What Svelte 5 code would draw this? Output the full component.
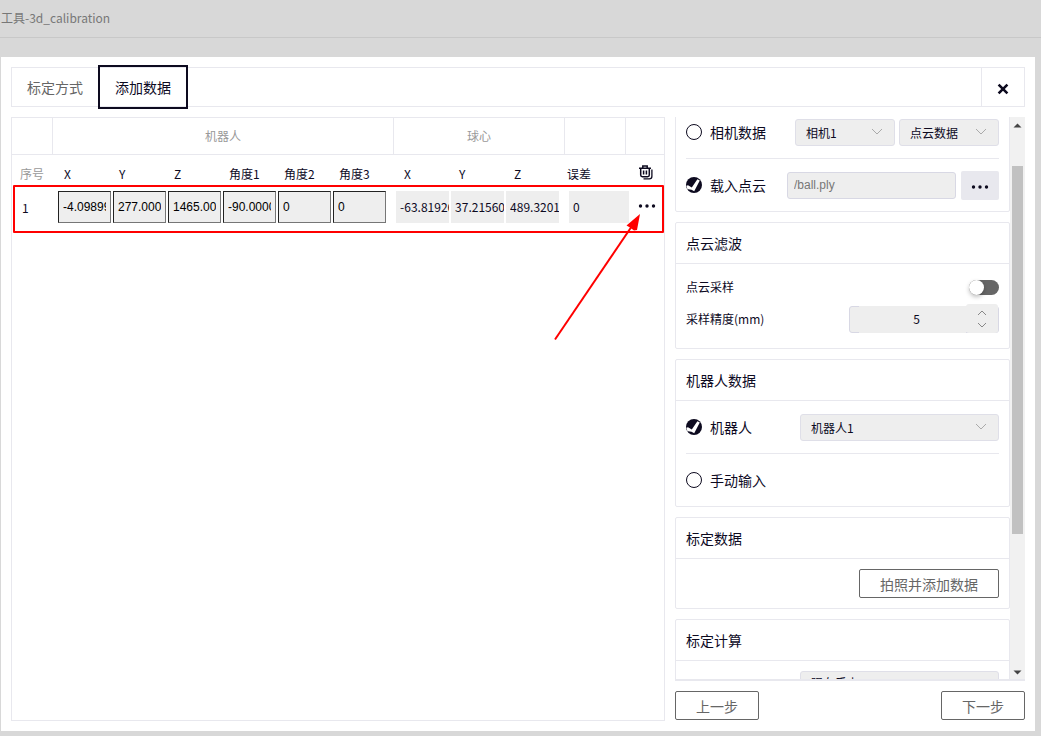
<script>
  let source = $state('cloud');
  let robotSource = $state('robot');
  let sampling = $state(false);
  const robotCols = ['X', 'Y', 'Z', '角度1', '角度2', '角度3'];
  const ballCols = ['X', 'Y', 'Z'];
  const row = {
    id: 1,
    robot: ['-4.098999', '277.000', '1465.00', '-90.0000', '0', '0'],
    ball: ['-63.81926', '37.21560', '489.3201'],
    error: '0'
  };
</script>

{#snippet dots()}
  <svg class="dots" width="18" height="6" viewBox="0 0 18 6" aria-hidden="true">
    <circle cx="2.5" cy="3" r="1.7" /><circle cx="9" cy="3" r="1.7" /><circle cx="15.5" cy="3" r="1.7" />
  </svg>
{/snippet}

{#snippet picker(label, value, size)}
  <span class="picker {size}">
    <select aria-label={label}><option>{value}</option></select>
    <svg width="12" height="8" viewBox="0 0 12 8" aria-hidden="true"><path d="M1 1l5 5 5-5" /></svg>
  </span>
{/snippet}

{#snippet mark(checked)}
  <svg class="mark" width="16" height="16" viewBox="0 0 16 16" aria-hidden="true">
    {#if checked}
      <circle cx="8" cy="8" r="8" fill="#0d0a1f" />
      <path d="M.4 8.800 2 8.200l3.800 2.400L11.400 2.200l2.400 1.200-5.600 10.800C6.600 12.800 4 12 1.400 12.200z" fill="#fff" />
    {:else}
      <circle cx="8" cy="8" r="7.5" fill="#fff" stroke="#0d0a1f" />
    {/if}
  </svg>
{/snippet}

<div class="page">
  <header class="title">工具-3d_calibration</header>
  <main class="dialog">
    <nav class="tabs">
      <button class="tab">标定方式</button>
      <button class="tab active">添加数据</button>
      <button class="close" aria-label="关闭">
        <svg width="12" height="12" viewBox="0 0 12 12"><path d="M1.600 1.600l8.800 8.800M10.400 1.600l-8.800 8.800" /></svg>
      </button>
    </nav>

    <div class="content">
      <section class="data">
        <table>
          <colgroup>
            <col class="c41" /><col class="c60" /><col class="c55" /><col class="c55" /><col class="c55" /><col class="c55" /><col class="c61" />
            <col class="c57" /><col class="c55" /><col class="c59" /><col class="c61" /><col class="c38" />
          </colgroup>
          <thead>
            <tr class="groups">
              <th></th><th colspan="6">机器人</th><th colspan="3">球心</th><th></th><th></th>
            </tr>
            <tr class="names">
              <th class="index">序号</th>
              {#each robotCols as c, i}<th class:first={i === 0} class="robot">{c}</th>{/each}
              {#each ballCols as c, i}<th class:first={i === 0} class="ball">{c}</th>{/each}
              <th class="error">误差</th>
              <th class="tool">
                <button class="bare" aria-label="清空">
                  <svg width="14" height="15" viewBox="0 0 14 15" fill="none" stroke="#0d0a1f" stroke-width="1.5" aria-hidden="true">
                    <path d="M0 3.2h12M3.8 3V1h4.4v2M1.7 3.5v6.6q0 1.7 1.7 1.7h5.2q1.7 0 1.7-1.7V3.5M4.6 5.5v4M7.4 5.5v4" />
                    <path d="M12.9 4.5v6.8q0 2.6-2.6 2.6H4.5" stroke-width="1.3" />
                  </svg>
                </button>
              </th>
            </tr>
          </thead>
          <tbody>
            <tr class="values">
              <td class="index">{row.id}</td>
              {#each row.robot as v, i}
                <td class:first={i === 0} class="robot"><input aria-label={'机器人 ' + robotCols[i]} value={v} /></td>
              {/each}
              {#each row.ball as v, i}
                <td class:first={i === 0} class="ball"><input aria-label={'球心 ' + ballCols[i]} value={v} readonly /></td>
              {/each}
              <td class="error"><input aria-label="误差" value={row.error} readonly /></td>
              <td class="tool"><button class="bare" aria-label="更多">{@render dots()}</button></td>
            </tr>
          </tbody>
        </table>
        <div class="highlight"></div>
        <svg class="arrow" width="88" height="128" viewBox="0 0 88 128" aria-hidden="true">
          <path d="M1 126.500L78 13" stroke="#f00" stroke-width="2" />
          <path d="M86 1L72.500 12.500 76 14.500 80 17.500 83 17z" fill="#f00" />
        </svg>
      </section>

      <aside class="side">
        <div class="scroller">
          <div class="cards">
            <section class="card open">
              <div class="row">
                <label><input type="radio" bind:group={source} value="camera" />{@render mark(source === 'camera')}相机数据</label>
                <div class="pair">{@render picker('相机', '相机1', 'small')}{@render picker('数据类型', '点云数据', 'small')}</div>
              </div>
              <div class="row">
                <label><input type="radio" bind:group={source} value="cloud" />{@render mark(source === 'cloud')}载入点云</label>
                <div class="file">
                  <input aria-label="点云文件" value="/ball.ply" />
                  <button class="browse" aria-label="浏览">{@render dots()}</button>
                </div>
              </div>
            </section>

            <section class="card">
              <h2>点云滤波</h2>
              <div class="fields">
                <div class="field">
                  <label for="sampling">点云采样</label>
                  <input id="sampling" class="switch" type="checkbox" role="switch" bind:checked={sampling} />
                </div>
                <div class="field">
                  <label for="precision">采样精度(mm)</label>
                  <div class="number">
                    <input id="precision" value="5" />
                    <div class="spin">
                      <button aria-label="增加"><svg width="10" height="6" viewBox="0 0 10 6"><path d="M1 5l4-4 4 4" /></svg></button>
                      <button aria-label="减少"><svg width="10" height="6" viewBox="0 0 10 6"><path d="M1 1l4 4 4-4" /></svg></button>
                    </div>
                  </div>
                </div>
              </div>
            </section>

            <section class="card">
              <h2>机器人数据</h2>
              <div class="row">
                <label><input type="radio" bind:group={robotSource} value="robot" />{@render mark(robotSource === 'robot')}机器人</label>
                {@render picker('机器人', '机器人1', 'large')}
              </div>
              <div class="row">
                <label><input type="radio" bind:group={robotSource} value="manual" />{@render mark(robotSource === 'manual')}手动输入</label>
              </div>
            </section>

            <section class="card">
              <h2>标定数据</h2>
              <div class="action"><button class="outline wide">拍照并添加数据</button></div>
            </section>

            <section class="card">
              <h2>标定计算</h2>
              <div class="action">{@render picker('标定类型', '眼在手上', 'large raised')}</div>
            </section>
          </div>
          <div class="bar" aria-hidden="true">
            <svg width="9" height="5" viewBox="0 0 9 5"><path d="M.5 4.500L4.500 .5l4 4z" /></svg>
            <div class="track"><div class="thumb"></div></div>
            <svg width="9" height="5" viewBox="0 0 9 5"><path d="M.5 .5L4.500 4.500l4-4z" /></svg>
          </div>
        </div>
        <footer>
          <button class="outline">上一步</button>
          <button class="outline">下一步</button>
        </footer>
      </aside>
    </div>
  </main>
</div>

<style>
  :global(body) { background: #d8d8d8; }
  .page, .page * { box-sizing: border-box; }
  .page {
    display: flex; flex-direction: column; height: 100vh; padding-bottom: 5px;
    font: 14px/20px "Noto Sans CJK SC", sans-serif; color: #0d0a1f;
  }
  button, input, select { font: inherit; color: inherit; margin: 0; padding: 0; border: 0; background: none; border-radius: 0; }
  .title { flex: none; height: 38px; padding: 0 1px; font-size: 12px; line-height: 35px; color: #777; border-bottom: 1px solid #c8c8c8; }
  .dialog { flex: 1; min-height: 0; display: flex; flex-direction: column; gap: 10px; margin: 19px 6px 0 1px; padding: 10px; background: #fff; }

  .tabs { flex: none; display: flex; align-items: center; height: 40px; border: 1px solid #e8e8ee; }
  .tab { height: 38px; padding: 0 15px; color: #666; }
  .tab.active { height: 44px; color: #0d0a1f; border: 2px solid #0d0a1f; }
  .close { display: grid; place-items: center; width: 43px; height: 38px; margin-left: auto; padding-top: 4px; border-left: 1px solid #e8e8ee; }
  .close path { stroke: #0d0a1f; stroke-width: 2.6; fill: none; }

  .content { flex: 1; min-height: 0; display: flex; gap: 10px; }
  .data { position: relative; flex: 1; min-width: 0; border: 1px solid #e8e8ee; }
  table { width: 100%; table-layout: fixed; border-collapse: separate; border-spacing: 0; font-size: 12px; }
  .c38 { width: 38px; } .c41 { width: 41px; } .c55 { width: 55px; } .c57 { width: 57px; }
  .c59 { width: 59px; } .c60 { width: 60px; } .c61 { width: 61px; }
  th, td { padding: 0; font-weight: 400; text-align: left; white-space: nowrap; }
  .groups th { height: 37px; text-align: center; color: #999; border-right: 1px solid #e8e8ee; border-bottom: 1px solid #e8e8ee; }
  .groups th:last-child { border-right: 0; }
  .names th { height: 36px; padding-top: 2px; }
  .names .index { padding-left: 8px; color: #999; }
  .names .robot { padding-left: 6px; } .names .robot.first { padding-left: 11px; }
  .names .ball { padding-left: 8px; } .names .ball.first { padding-left: 10px; }
  .names .error { padding-left: 2px; }
  .values td { height: 32px; }
  .values .index { padding: 2px 0 0 10px; }
  .values .robot.first { padding-left: 5px; }
  .values .ball.first { padding-left: 2px; }
  .values .error { padding-left: 4px; }
  td input { display: block; width: 53px; height: 32px; padding: 0 0 2px 4px; background: #eee; }
  .robot input { padding: 0 4px; border: 1px solid; border-color: #222 #767676 #767676 #222; font-family: "Liberation Sans", sans-serif; color: #000; }
  .error input { width: 60px; }
  .names .tool { padding: 0 0 2px 13px; }
  .values .tool { padding: 0 0 2px 12px; }
  .bare { display: block; }
  .bare svg { display: block; }
  .dots { fill: #0d0a1f; }
  .highlight { position: absolute; top: 67px; left: 1px; right: 0; height: 48px; border: 2px solid #f00; border-radius: 1px; pointer-events: none; }
  .arrow { position: absolute; top: 95px; right: 22px; pointer-events: none; }

  .side { flex: none; width: 350px; display: flex; flex-direction: column; gap: 10px; padding-bottom: 1px; }
  .scroller { flex: 1; min-height: 0; display: flex; overflow: hidden; border-bottom: 2px solid #e8e8ee; }
  .cards { flex: 1; min-width: 0; display: flex; flex-direction: column; gap: 10px; }
  .card { flex: none; border: 1px solid #e8e8ee; border-radius: 2px; }
  .card.open { margin-top: -12px; }
  h2 { margin: 0; height: 41px; padding: 0 10px; font-size: 14px; font-weight: 400; line-height: 40px; border-bottom: 1px solid #e8e8ee; }
  .row { display: flex; align-items: center; justify-content: space-between; height: 52px; margin: 0 10px; }
  .row + .row { height: 53px; border-top: 1px solid #e8e8ee; }
  .row label { display: flex; align-items: center; gap: 8px; }
  .row label input { position: absolute; opacity: 0; width: 16px; height: 16px; }
  .mark { flex: none; }
  .pair { display: flex; gap: 4px; }
  .picker { position: relative; display: block; height: 27px; }
  .small { width: 100px; } .large { width: 199px; }
  select { appearance: none; display: block; width: 100%; height: 27px; padding: 2px 24px 0 10px; font-size: 12px; background: #eee; border: 1px solid #dfdfe8; border-radius: 3px; }
  .raised select { padding-top: 0; padding-bottom: 4px; }
  .picker svg { position: absolute; right: 12px; top: 9px; pointer-events: none; fill: none; stroke: #aaa; }
  .file { display: flex; align-items: center; gap: 5px; }
  .file input { width: 169px; height: 27px; padding: 0 6px; font: 12px "Liberation Sans", sans-serif; color: #777; background: #eee; border: 1px solid #d8d8e4; border-radius: 3px; }
  .browse { display: grid; place-items: center; width: 38px; height: 29px; padding-top: 3px; background: #e8e8ee; border-radius: 2px; }
  .fields { padding: 7px 10px 13px; font-size: 12px; }
  .field { display: flex; align-items: center; justify-content: space-between; height: 32px; }
  .switch { appearance: none; display: flex; width: 30px; height: 15px; border-radius: 8px; background: #666; }
  .switch::before { content: ""; width: 15px; height: 15px; border-radius: 50%; background: #fff; box-shadow: 0 2px 4px rgba(0, 0, 0, .25); }
  .switch:checked { justify-content: flex-end; background: #0d0a1f; }
  .number { display: flex; align-items: center; width: 150px; height: 27px; padding-left: 9px; background: #eee; border: 1px solid #d8d8e4; border-radius: 3px; }
  .number input { flex: 1; min-width: 0; height: 27px; padding: 0 0 2px 8px; text-align: center; background: #eee; }
  .spin { display: flex; flex-direction: column; justify-content: space-between; align-items: center; width: 32px; height: 29px; padding: 6px 0 5px; margin-top: -2px; background: #eee; border-radius: 3px; }
  .spin button, .spin svg { display: block; height: 6px; }
  .spin path { fill: none; stroke: #888; }
  .action { display: flex; justify-content: flex-end; padding: 10px; }
  .outline { width: 84px; height: 29px; color: #666; border: 1px solid #666; border-radius: 2px; background: #fff; }
  .wide { width: 140px; }
  .bar { flex: none; display: flex; flex-direction: column; align-items: center; justify-content: space-between; width: 15px; padding: 6px 0 4px; background: #f1f1f1; }
  .bar svg { flex: none; fill: #444; }
  .track { flex: 1; width: 11px; padding: 38px 0 136px; }
  .thumb { height: 100%; background: #c1c1c1; }
  footer { flex: none; display: flex; justify-content: space-between; }
</style>
